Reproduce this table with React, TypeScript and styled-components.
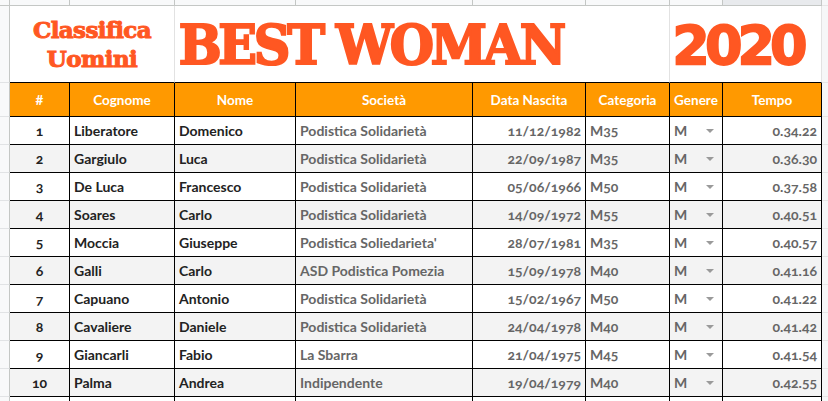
import styled, { createGlobalStyle, css } from "styled-components";

type Row = {
  pos: number;
  cognome: string;
  nome: string;
  societa: string;
  nascita: string;
  categoria: string;
  genere: string;
  tempo: string;
};

const ROWS: Row[] = [
  { pos: 1, cognome: "Liberatore", nome: "Domenico", societa: "Podistica Solidarietà", nascita: "11/12/1982", categoria: "M35", genere: "M", tempo: "0.34.22" },
  { pos: 2, cognome: "Gargiulo", nome: "Luca", societa: "Podistica Solidarietà", nascita: "22/09/1987", categoria: "M35", genere: "M", tempo: "0.36.30" },
  { pos: 3, cognome: "De Luca", nome: "Francesco", societa: "Podistica Solidarietà", nascita: "05/06/1966", categoria: "M50", genere: "M", tempo: "0.37.58" },
  { pos: 4, cognome: "Soares", nome: "Carlo", societa: "Podistica Solidarietà", nascita: "14/09/1972", categoria: "M55", genere: "M", tempo: "0.40.51" },
  { pos: 5, cognome: "Moccia", nome: "Giuseppe", societa: "Podistica Soliedarieta'", nascita: "28/07/1981", categoria: "M35", genere: "M", tempo: "0.40.57" },
  { pos: 6, cognome: "Galli", nome: "Carlo", societa: "ASD Podistica Pomezia", nascita: "15/09/1978", categoria: "M40", genere: "M", tempo: "0.41.16" },
  { pos: 7, cognome: "Capuano", nome: "Antonio", societa: "Podistica Solidarietà", nascita: "15/02/1967", categoria: "M50", genere: "M", tempo: "0.41.22" },
  { pos: 8, cognome: "Cavaliere", nome: "Daniele", societa: "Podistica Solidarietà", nascita: "24/04/1978", categoria: "M40", genere: "M", tempo: "0.41.42" },
  { pos: 9, cognome: "Giancarli", nome: "Fabio", societa: "La Sbarra", nascita: "21/04/1975", categoria: "M45", genere: "M", tempo: "0.41.54" },
  { pos: 10, cognome: "Palma", nome: "Andrea", societa: "Indipendente", nascita: "19/04/1979", categoria: "M40", genere: "M", tempo: "0.42.55" },
];

const HEADERS = ["#", "Cognome", "Nome", "Società", "Data Nascita", "Categoria", "Genere", "Tempo"];

const TITLE = "#ff5722";
const ORANGE = "#ff9900";

const GlobalStyle = createGlobalStyle`
  html, body {
    margin: 0;
    padding: 0;
    background: #fff;
  }
  body {
    width: 828px;
    height: 401px;
    overflow: hidden;
    font-family: Lato, "Liberation Sans", sans-serif;
  }
`;

const Sheet = styled.div`
  display: grid;
  grid-template-columns: 10px 60px 105px 121px 177px 113px 84px 53px 99px 1fr;
  grid-template-rows: 6px 77px 34px repeat(11, 28px);
  width: 828px;
  height: 401px;
  overflow: hidden;
`;

const StripCell = styled.div<{ $selected?: boolean }>`
  box-sizing: border-box;
  background: ${(p) => (p.$selected ? "#e8eaed" : "#f8f9fa")};
  border-right: 1px solid #c4c7c5;
  border-bottom: 1px solid #c4c7c5;
`;

const GutterCell = styled.div`
  box-sizing: border-box;
  background: #f8f9fa;
  border-right: 1px solid #c4c7c5;
  border-bottom: 1px solid #e1e3e5;
`;

const Trailing = styled.div`
  background: #f6f7f8;
  border-bottom: 1px solid #e6e6e6;
`;

const TitleCell = styled.div<{ $span: number }>`
  grid-column: span ${(p) => p.$span};
  box-sizing: border-box;
  border-right: 1px solid #e2e2e2;
  border-bottom: 1px solid #000;
  background: #fff;
  display: flex;
  align-items: center;
  color: ${TITLE};
  overflow: hidden;
  white-space: nowrap;
`;

const SubTitle = styled.div`
  width: 100%;
  text-align: center;
  font-family: "DejaVu Serif", serif;
  font-weight: 700;
  font-size: 23px;
  line-height: 29px;
  letter-spacing: -0.6px;
  -webkit-text-stroke: 1px ${TITLE};
  margin-top: -1px;
`;

const BigTitle = styled.div`
  padding-left: 4px;
  font-family: "DejaVu Serif", serif;
  font-weight: 700;
  font-size: 54px;
  letter-spacing: -3.5px;
  -webkit-text-stroke: 2.2px ${TITLE};
  transform: scaleX(0.94);
  transform-origin: left center;
  margin-top: 2px;
`;

const Year = styled.div`
  width: 100%;
  text-align: center;
  padding-right: 16px;
  font-family: "DejaVu Sans", sans-serif;
  font-weight: 700;
  font-size: 54px;
  letter-spacing: -5px;
  -webkit-text-stroke: 1.8px ${TITLE};
  margin-top: 2px;
`;

const HeadCell = styled.div`
  box-sizing: border-box;
  background: ${ORANGE};
  color: #fff;
  border-right: 1px solid #000;
  border-bottom: 1px solid #000;
  display: flex;
  align-items: center;
  justify-content: center;
  font-weight: 700;
  font-size: 13.5px;
  white-space: nowrap;
  overflow: hidden;
`;

const Cell = styled.div<{ $shade: boolean; $align?: "left" | "center" | "right"; $muted?: boolean }>`
  box-sizing: border-box;
  background: ${(p) => (p.$shade ? "#f3f3f3" : "#fff")};
  border-right: 1px solid #000;
  border-bottom: 1px solid #000;
  display: flex;
  align-items: center;
  padding: 0 4px;
  font-weight: 700;
  font-size: 14px;
  color: ${(p) => (p.$muted ? "#666" : "#222")};
  font-variant-numeric: oldstyle-nums;
  white-space: nowrap;
  overflow: hidden;
  ${(p) =>
    p.$align === "center" &&
    css`
      justify-content: center;
    `}
  ${(p) =>
    p.$align === "right" &&
    css`
      justify-content: flex-end;
    `}
`;

const GenereCell = styled(Cell)`
  justify-content: space-between;
  padding-right: 8px;
`;

const Caret = styled.span`
  width: 0;
  height: 0;
  border-left: 4px solid transparent;
  border-right: 4px solid transparent;
  border-top: 4px solid #9a9a9a;
`;

export default function App() {
  return (
    <>
      <GlobalStyle />
      <Sheet>
        <StripCell />
        {HEADERS.map((h, i) => (
          <StripCell key={h} $selected={i === 7} />
        ))}
        <Trailing />

        <GutterCell />
        <TitleCell $span={2}>
          <SubTitle>
            Classifica
            <br />
            Uomini
          </SubTitle>
        </TitleCell>
        <TitleCell $span={4}>
          <BigTitle>BEST WOMAN</BigTitle>
        </TitleCell>
        <TitleCell $span={2}>
          <Year>2020</Year>
        </TitleCell>
        <Trailing />

        <GutterCell />
        {HEADERS.map((h) => (
          <HeadCell key={h}>{h}</HeadCell>
        ))}
        <Trailing />

        {ROWS.map((r, i) => {
          const shade = i % 2 === 1;
          return [
            <GutterCell key={`g${r.pos}`} />,
            <Cell key={`a${r.pos}`} $shade={shade} $align="center">{r.pos}</Cell>,
            <Cell key={`b${r.pos}`} $shade={shade}>{r.cognome}</Cell>,
            <Cell key={`c${r.pos}`} $shade={shade}>{r.nome}</Cell>,
            <Cell key={`d${r.pos}`} $shade={shade} $muted>{r.societa}</Cell>,
            <Cell key={`e${r.pos}`} $shade={shade} $muted $align="right">{r.nascita}</Cell>,
            <Cell key={`f${r.pos}`} $shade={shade} $muted>{r.categoria}</Cell>,
            <GenereCell key={`h${r.pos}`} $shade={shade} $muted>
              {r.genere}
              <Caret />
            </GenereCell>,
            <Cell key={`t${r.pos}`} $shade={shade} $muted $align="right">{r.tempo}</Cell>,
            <Trailing key={`z${r.pos}`} />,
          ];
        })}

        <GutterCell />
        {HEADERS.map((h) => (
          <Cell key={`x${h}`} $shade={false} />
        ))}
        <Trailing />
      </Sheet>
    </>
  );
}
